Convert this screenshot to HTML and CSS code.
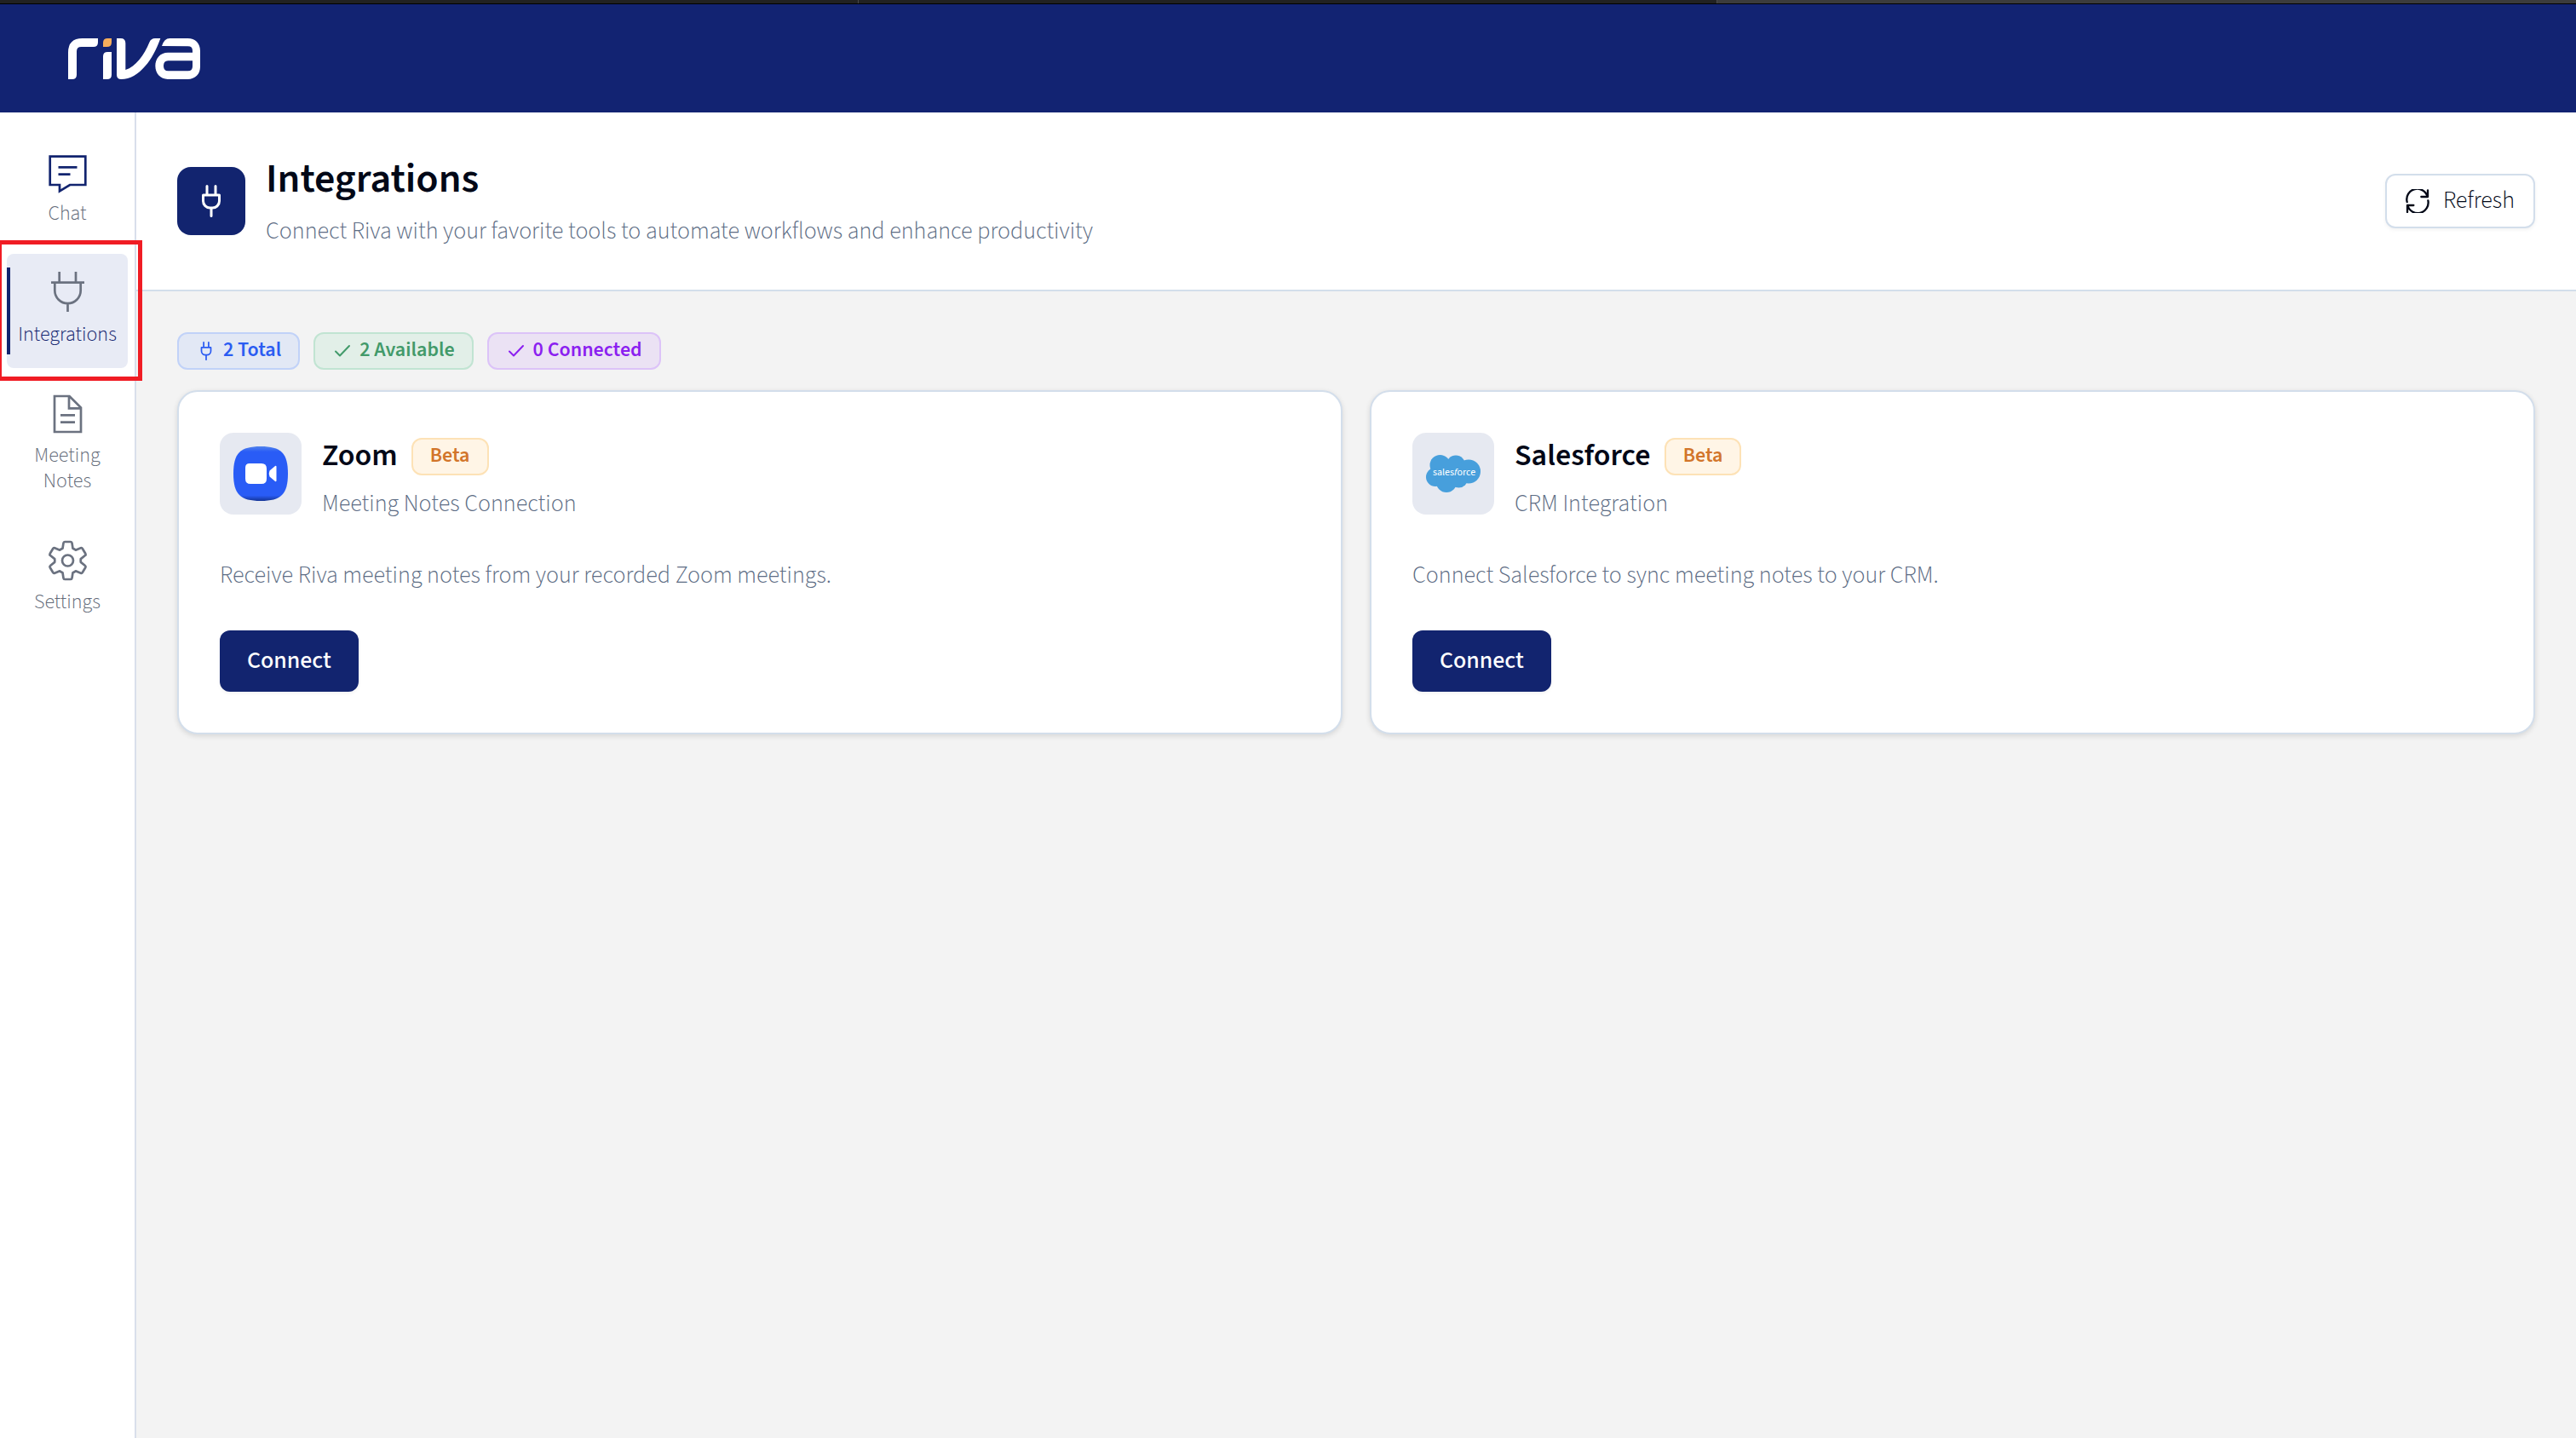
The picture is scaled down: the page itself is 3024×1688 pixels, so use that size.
FILE: index.html
```html
<!DOCTYPE html>
<html lang="en">
<head>
<meta charset="utf-8">
<title>Riva – Integrations</title>
<link rel="stylesheet" href="styles.css">
</head>
<body>
<svg class="defs" aria-hidden="true">
  <symbol id="plug" viewBox="0 0 24 38">
    <path d="M7 1.5V12M17 1.5V12M2.5 12h19v7a8 8 0 0 1-8 8h-3a8 8 0 0 1-8-8zM12 27v9.500" fill="none" stroke="currentColor" stroke-width="3" stroke-linecap="round" stroke-linejoin="round"/>
  </symbol>
  <symbol id="check" viewBox="0 0 24 24">
    <path d="M4 12.500l5 5L20 6" fill="none" stroke="currentColor" stroke-width="2" stroke-linecap="round" stroke-linejoin="round"/>
  </symbol>
</svg>

<div class="tabstrip"><span class="tab"></span><span class="tab"></span><span class="tab tab-light"></span></div>

<header class="topbar">
  <a href="#" class="logo" aria-label="Riva">
    <svg viewBox="240 132 465 144" width="155" height="48">
      <g fill="#fff" fill-rule="evenodd">
        <path d="M240 276V182Q240 132 290 132H345V146Q345 162 329 162H286Q270 162 270 178V260Q270 276 254 276Z"/>
        <path d="M363 276V196Q363 180 379 180H393V260Q393 276 377 276Z"/>
        <path d="M411 132H425Q442 132 442 149V243C478 232 508 190 526 146Q532 132 546 132H565C540 205 490 276 427 276Q411 276 411 260Z"/>
        <path d="M570 159Q578 132 598 132H661C688 132 705 150 705 176V232C705 258 688 276 661 276H591C565 276 547 256 547 229C547 202 565 182 591 182H678V176Q678 160 662 160ZM592 211Q576 211 576 229Q576 247 592 247H662Q678 247 678 231V211Z"/>
      </g>
      <path fill="#f6ae5c" d="M363 162V148Q363 132 379 132H393V146Q393 162 377 162Z"/>
    </svg>
  </a>
</header>

<div class="shell">
  <nav class="sidebar">
    <a href="#" class="nav-item">
      <svg class="nav-icon nav-icon-brand" viewBox="0 0 48 48"><path d="M3.700 5.700h41.600V39H27L15 46.300V39H3.700zM13.500 18.300h22M13.500 26.700h14"/></svg>
      <span>Chat</span>
    </a>
    <a href="#" class="nav-item active" aria-current="page">
      <svg class="nav-icon" viewBox="0 0 48 48"><path d="M14.700-1v12.700M34-1v12.700M5 11.700h39M9.300 11.700V21a15.200 15.200 0 0 0 30.400 0v-9.300M24.500 36.300V46"/></svg>
      <span>Integrations</span>
      <i class="highlight"></i>
    </a>
    <a href="#" class="nav-item">
      <svg class="nav-icon" viewBox="0 0 48 48"><path d="M9 3h17.500L40 16.500V45H9zM26 3v14.300h14M16 25.300h17M16 33.700h17"/></svg>
      <span>Meeting<br>Notes</span>
    </a>
    <a href="#" class="nav-item">
      <svg class="nav-icon" viewBox="-24.500 -24 48 48"><path stroke-linejoin="round" d="M-6-14.200L-5-20.600Q-4.800-22-3.500-22H3.500Q4.800-22 5-20.600L6-14.200Q7.500-13.500 9.300-12.300L15.300-14.700Q16.700-15.200 17.300-14L20.900-8Q21.500-6.800 20.400-6L15.300-1.900Q15-0 15.300 1.900L20.400 6Q21.500 6.800 20.900 8L17.300 14Q16.700 15.200 15.300 14.700L9.300 12.300Q7.500 13.500 6 14.200L5 20.600Q4.800 22 3.500 22H-3.500Q-4.800 22-5 20.600L-6 14.200Q-7.500 13.500-9.300 12.300L-15.300 14.700Q-16.700 15.200-17.300 14L-20.900 8Q-21.500 6.800-20.400 6L-15.300 1.900Q-15 0-15.300-1.900L-20.400-6Q-21.500-6.800-20.900-8L-17.300-14Q-16.700-15.200-15.300-14.700L-9.300-12.300Q-7.500-13.500-6-14.200Z"/><circle r="6.500"/></svg>
      <span>Settings</span>
    </a>
  </nav>

  <main class="main">
    <section class="page-head">
      <div class="page-icon"><svg width="24" height="38"><use href="#plug"/></svg></div>
      <div class="page-text">
        <h1>Integrations</h1>
        <p>Connect Riva with your favorite tools to automate workflows and enhance productivity</p>
      </div>
      <button type="button" class="refresh">
        <svg viewBox="252 155 84 84" width="28" height="28"><path d="M257 200A37 37 0 0 1 329 182M330 159V182H307M331 195A37 37 0 0 1 259 212M258 236V212H280" fill="none" stroke="currentColor" stroke-width="7" stroke-linecap="round" stroke-linejoin="round"/></svg>
        <span>Refresh</span>
      </button>
    </section>

    <section class="content">
      <div class="pills">
        <div class="pill pill-blue"><svg width="24" height="22"><use href="#plug"/></svg><span>2 Total</span></div>
        <div class="pill pill-green"><svg width="24" height="24"><use href="#check"/></svg><span>2 Available</span></div>
        <div class="pill pill-purple"><svg width="24" height="24"><use href="#check"/></svg><span>0 Connected</span></div>
      </div>

      <div class="cards">
        <article class="card">
          <div class="card-head">
            <div class="card-icon">
              <svg viewBox="0 0 64 64" width="64" height="64">
                <defs><linearGradient id="zoom" x1="0" y1="0" x2="0" y2="1"><stop offset="0" stop-color="#5183ec"/><stop offset=".1" stop-color="#295cf6"/><stop offset=".9" stop-color="#295cf6"/><stop offset="1" stop-color="#143496"/></linearGradient></defs>
                <path fill="url(#zoom)" d="M32 0C56 0 64 8 64 32S56 64 32 64 0 56 0 32 8 0 32 0Z"/>
                <path fill="#fff" d="M19 20h14q6 0 6 6v12q0 6-6 6H20q-6 0-6-6V25q0-5 5-5zM42.500 28.500l6.500-5.500q1.500-1 1.500 1v16q0 2-1.500 1l-6.500-5.500q-1.500-3.500 0-7z"/>
              </svg>
            </div>
            <div class="card-text">
              <div class="card-title"><h2>Zoom</h2><span class="pill pill-amber"><span>Beta</span></span></div>
              <p>Meeting Notes Connection</p>
            </div>
          </div>
          <p class="desc">Receive Riva meeting notes from your recorded Zoom meetings.</p>
          <button type="button" class="connect">Connect</button>
        </article>

        <article class="card">
          <div class="card-head">
            <div class="card-icon">
              <svg viewBox="0 0 64 64" width="64" height="64">
                <g fill="#479fdc"><circle cx="16.500" cy="22" r="12"/><circle cx="35" cy="21.500" r="11"/><circle cx="50" cy="29.500" r="14"/><circle cx="11" cy="36" r="11"/><circle cx="24" cy="42" r="12"/><circle cx="38.500" cy="38" r="10.500"/><path d="M14 20h34v22H14z"/></g>
                <text class="sf-word" x="33" y="34" text-anchor="middle">sales<tspan font-style="italic">f</tspan>orce</text>
              </svg>
            </div>
            <div class="card-text">
              <div class="card-title"><h2>Salesforce</h2><span class="pill pill-amber"><span>Beta</span></span></div>
              <p>CRM Integration</p>
            </div>
          </div>
          <p class="desc">Connect Salesforce to sync meeting notes to your CRM.</p>
          <button type="button" class="connect">Connect</button>
        </article>
      </div>
    </section>
  </main>
</div>
</body>
</html>
```
FILE: styles.css
```css
:root {
  --brand: #12246f;
  --line: #d3deeb;
  --ink: #020817;
  --muted: #5c6c84;
  --font: "Source Sans 3", "Source Sans Pro", "Noto Sans CJK SC", sans-serif;
}

* { box-sizing: border-box; }

body {
  margin: 0;
  min-height: 100vh;
  display: flex;
  flex-direction: column;
  background: #f3f3f3;
  color: var(--ink);
  font-family: var(--font);
  font-size: 28px;
  font-weight: 300;
  line-height: 44px;
}

h1, h2, p { margin: 0; }
button { font: inherit; cursor: pointer; }
svg { display: block; flex: none; }
.defs { position: absolute; width: 0; height: 0; }

.tabstrip {
  display: grid;
  grid-template-columns: repeat(3, 1fr);
  height: 5px;
  border-bottom: 1px solid #000;
  background: #222;
}
.tab { border-right: 1px solid #4a4a4a; }
.tab-light { background: #3c3c3c; border-right: 0; }

.topbar {
  display: flex;
  align-items: center;
  height: 127px;
  padding: 0 80px;
  background: #122372;
}

.shell { display: flex; flex: 1; }

.sidebar {
  display: flex;
  flex-direction: column;
  gap: 8px;
  flex: none;
  width: 160px;
  padding: 24px 8px;
  background: #fff;
  border-right: 2px solid #d9dfeb;
}
.nav-item {
  position: relative;
  display: flex;
  flex-direction: column;
  align-items: center;
  gap: 10px;
  padding: 22px 0 24px;
  border-radius: 8px;
  color: #646b79;
  font-size: 24px;
  line-height: 30px;
  text-align: center;
  text-decoration: none;
}
.nav-icon {
  width: 48px;
  height: 48px;
  overflow: visible;
  fill: none;
  stroke: #6b7280;
  stroke-width: 2.7;
}
.nav-icon-brand { stroke: var(--brand); }
.nav-item.active { background: #e8ebf5; color: var(--brand); }
.nav-item.active::before {
  content: "";
  position: absolute;
  inset: 16px auto 16px 0;
  width: 4px;
  background: var(--brand);
}
.highlight {
  position: absolute;
  inset: -16px -17px -15px -11px;
  z-index: 2;
  border: 5px solid #f01c24;
}

.main { flex: 1; min-width: 0; }

.page-head {
  display: flex;
  align-items: center;
  gap: 24px;
  padding: 45px 48px;
  background: #fff;
  border-bottom: 2px solid var(--line);
}
.page-icon {
  display: grid;
  place-items: center;
  width: 80px;
  height: 80px;
  border-radius: 16px;
  background: var(--brand);
  color: #fff;
}
.page-text { flex: 1; }
.page-text h1 { font-size: 48px; font-weight: 600; line-height: 66px; }
.page-text p { margin-top: 4px; line-height: 48px; color: var(--muted); }

.refresh {
  display: flex;
  align-items: center;
  gap: 16px;
  padding: 0 22px;
  border: 2px solid var(--line);
  border-radius: 12px;
  background: #fff;
  color: var(--ink);
  box-shadow: 0 2px 4px rgba(0, 0, 0, .05);
}
.refresh span { line-height: 58px; padding-bottom: 2px; }

.content { padding: 48px; }
.pills { display: flex; gap: 16px; margin-bottom: 24px; }
.pill {
  display: flex;
  align-items: center;
  gap: 8px;
  padding: 0 20px;
  border: 2px solid;
  border-radius: 12px;
  font-size: 24px;
  font-weight: 600;
}
.pill > span { line-height: 38px; padding-bottom: 2px; }
.pill-blue { color: #2b5cf2; background: #e2e8f5; border-color: #c1d2f8; }
.pill-green { color: #429a6a; background: #e2efe8; border-color: #c1e4d2; }
.pill-purple { color: #8b1ff0; background: #ebe2f4; border-color: #dcc3f8; }
.pill-amber { color: #d2752a; background: #fff5e6; border-color: #fde2b6; }

.cards { display: grid; grid-template-columns: 1fr 1fr; gap: 32px; }
.card {
  padding: 48px;
  border: 2px solid var(--line);
  border-radius: 24px;
  background: #fff;
  box-shadow: 0 2px 6px rgba(0, 0, 0, .12);
}
.card-head { display: flex; align-items: flex-start; gap: 24px; }
.card-icon {
  display: grid;
  place-items: center;
  width: 96px;
  height: 96px;
  border-radius: 16px;
  background: #e6e9f1;
}
.card-title { display: flex; align-items: flex-start; gap: 16px; height: 52px; }
.card-title h2 { font-size: 36px; font-weight: 600; line-height: 54px; }
.card-title .pill { margin-top: 6px; }
.card-text p { margin-top: 9px; color: var(--muted); }
.desc { margin-top: 40px; color: var(--muted); }
.connect {
  display: block;
  margin-top: 43px;
  padding: 0 32px 2px;
  border: 0;
  border-radius: 12px;
  background: var(--brand);
  color: #fff;
  font-weight: 500;
  line-height: 70px;
  box-shadow: 0 2px 4px rgba(0, 0, 0, .05);
}
.sf-word { fill: #fff; font-family: var(--font); font-size: 12px; font-weight: 400; }
```
